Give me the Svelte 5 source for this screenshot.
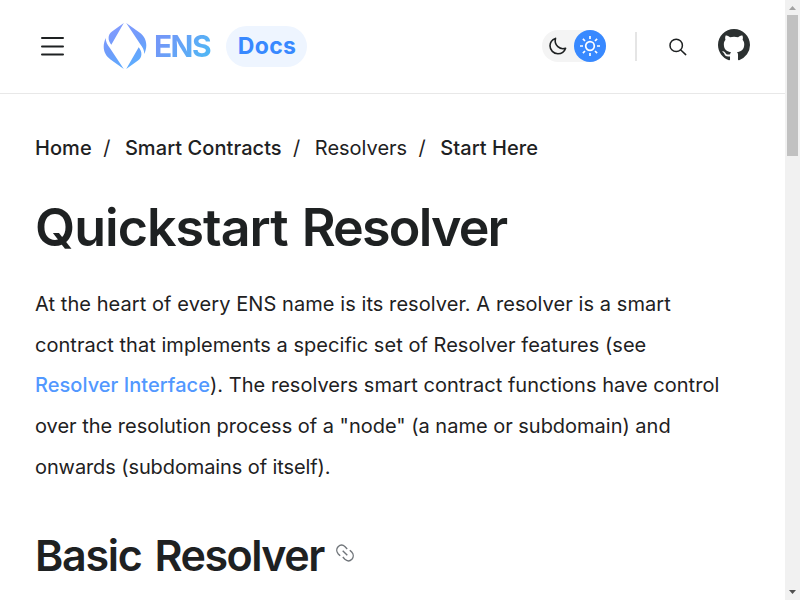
<script>
  const crumbs = [
    { label: 'Home', link: true },
    { label: 'Smart Contracts', link: true },
    { label: 'Resolvers', link: false },
    { label: 'Start Here', link: true }
  ];
</script>

<div class="window">
  <div class="page">
    <header>
      <button class="menu" aria-label="Menu">
        <svg width="24" height="20" viewBox="0 0 24 20"><path d="M2 2H23M2 10.5H23M2 18.5H23" stroke="#1e2122" stroke-width="2" stroke-linecap="round" /></svg>
      </button>
      <div class="brand">
        <svg width="44" height="48" viewBox="103 22 44 48">
          <defs>
            <linearGradient id="ens" x1="115" y1="25" x2="135" y2="69" gradientUnits="userSpaceOnUse">
              <stop offset="0" stop-color="#849cff" /><stop offset="0.45" stop-color="#6f9bfa" /><stop offset="1" stop-color="#5ab0ff" />
            </linearGradient>
          </defs>
          <g fill="url(#ens)">
            <path d="M123.8 22.9L111.3 44.7C109.5 42.4 108.4 40 108.6 37.8C108.6 35.2 109.8 33 112 31.4Z" />
            <path d="M105.7 38C105.7 42 107.4 44.8 109.7 47.8L123.8 69L110.5 59.4C103 54 102.2 46 105.7 38Z" />
            <path d="M126.2 69.1L138.7 47.3C140.5 49.6 141.6 52 141.4 54.2C141.4 56.8 140.2 59 138 60.6Z" />
            <path d="M144.3 54C144.3 50 142.6 47.2 140.3 44.2L126.2 23L139.5 32.6C147 38 147.8 46 144.3 54Z" />
          </g>
        </svg>
        <span class="ens">ENS</span>
      </div>
      <span class="docs">Docs</span>
      <div class="toggle">
        <span class="moon">
          <svg width="18" height="18" viewBox="0 0 18 18" fill="none" stroke="#1e2122" stroke-width="1.6" stroke-linejoin="round" stroke-linecap="round"><path d="M6.5 1.4C3.2 2.6 1 5.4 1 8.8C1 13.2 4.5 16.7 8.9 16.7C12.5 16.7 15.5 14.5 16.6 11.2C11.1 13.1 4.8 8.5 6.5 1.4Z" /></svg>
        </span>
        <span class="sun">
          <svg width="22" height="22" viewBox="0 0 22 22" fill="none" stroke="#fff" stroke-width="1.7"><circle cx="11" cy="11" r="4.3" /><path d="M11 1V4M11 18V21M1 11H4M18 11H21M3.9 3.9L6 6M16 16L18.1 18.1M18.1 3.9L16 6M6 16L3.9 18.1" /></svg>
        </span>
      </div>
      <span class="divider"></span>
      <button class="search" aria-label="Search">
        <svg width="18" height="18" viewBox="0 0 18 18" fill="none" stroke="#1e2122" stroke-width="1.5" stroke-linecap="round"><circle cx="7.2" cy="7.4" r="6.2" /><path d="M11.8 12L16.7 16.6" /></svg>
      </button>
      <svg class="github" width="32" height="32" viewBox="0 0 16 16" fill="#2c3131"><path d="M8 0C3.58 0 0 3.58 0 8c0 3.54 2.29 6.53 5.47 7.59.4.07.55-.17.55-.38 0-.19-.01-.82-.01-1.49-2.01.37-2.53-.49-2.69-.94-.09-.23-.48-.94-.82-1.13-.28-.15-.68-.52-.01-.53.63-.01 1.08.58 1.23.82.72 1.21 1.87.87 2.33.66.07-.52.28-.87.51-1.07-1.78-.2-3.64-.89-3.64-3.95 0-.87.31-1.59.82-2.15-.08-.2-.36-1.02.08-2.12 0 0 .67-.21 2.2.82.64-.18 1.32-.27 2-.27s1.36.09 2 .27c1.53-1.04 2.2-.82 2.2-.82.44 1.1.16 1.92.08 2.12.51.56.82 1.27.82 2.15 0 3.07-1.87 3.75-3.65 3.95.29.25.54.73.54 1.48 0 1.07-.01 1.93-.01 2.2 0 .21.15.46.55.38A8.01 8.01 0 0 0 16 8c0-4.42-3.58-8-8-8Z" /></svg>
    </header>
    <main>
      <nav>
        {#each crumbs as crumb, i}
          {#if i}<span class="slash">/</span>{/if}<span class:link={crumb.link}>{crumb.label}</span>
        {/each}
      </nav>
      <h1>Quickstart <span>Resolver</span></h1>
      <p>
        <span class="roomy">At the heart of every ENS name is its resolver. A resolver is a smart</span><br />
        contract that implements a specific set of Resolver features (see<br />
        <a href="#interface">Resolver Interface</a>). The resolvers smart contract functions have control<br />
        <span class="snug">over the resolution process of a "node" (a name or subdomain) and</span><br />
        <span class="tight">onwards (subdomains of itself).</span>
      </p>
      <div class="section">
        <h2>Basic <span>Resolver</span></h2>
        <svg width="18" height="18" viewBox="0 0 18 18" fill="none" stroke="#70757a" stroke-width="1.4"><path d="M4.2 11.8L2.3 9.9C.3 7.8.3 4.8 2.1 2.8C4.1.8 7 .8 9.1 2.7L11.2 4.9M13.8 6.2L15.7 8.1C17.7 10.2 17.7 13.2 15.9 15.2C13.9 17.2 11 17.2 8.9 15.3L6.8 13.1M6.7 6.7L11.3 11.3" /></svg>
      </div>
    </main>
  </div>
  <div class="scrollbar">
    <svg width="15" height="15" viewBox="0 0 15 15"><path d="M4 10H11L7.5 6Z" fill="#a3a3a3" /></svg>
    <div class="thumb"></div>
    <svg width="15" height="15" viewBox="0 0 15 15"><path d="M4 5H11L7.5 9Z" fill="#505050" /></svg>
  </div>
</div>

<style>
  :global(body) { overflow: hidden; background: #fff; }
  .window { display: flex; width: 800px; height: 600px; overflow: hidden; font-family: Inter, "Liberation Sans", sans-serif; color: #1e2122; }
  .page { width: 785px; flex: none; }
  svg { display: block; flex: none; }
  button { border: 0; padding: 0; background: none; }
  header { display: flex; align-items: center; box-sizing: border-box; height: 94px; padding: 0 35px 0 40px; border-bottom: 1px solid #e8e8e8; }
  .menu { margin: 0 39px 1px 0; }
  .brand { display: flex; align-items: center; width: 123px; padding-bottom: 1px; }
  .ens { margin-left: 7px; font-size: 30px; line-height: 36px; font-weight: 700; letter-spacing: -1.6px; padding-right: 2px; background: linear-gradient(125deg, #7298f8 20%, #52b5f5 85%); background-clip: text; color: transparent; }
  .docs { box-sizing: border-box; width: 81px; height: 41px; padding-left: 1px; line-height: 41px; border-radius: 21px; background: #eef5ff; color: #3889ff; text-align: center; font-size: 23px; font-weight: 700; letter-spacing: .35px; }
  .toggle { display: flex; justify-content: space-between; align-items: center; width: 64px; height: 32px; margin: 0 0 1px auto; border-radius: 16px; background: #f4f4f4; }
  .moon { padding-left: 7px; }
  .sun { display: grid; place-items: center; width: 32px; height: 32px; border-radius: 50%; background: #3889ff; }
  .divider { width: 2px; height: 29px; margin: 0 32px 0 29px; background: #e5e5e5; }
  .search { margin: 0 31px 0 0; }
  .github { margin-bottom: 3px; }
  main { padding: 41px 35px 0; }
  nav { display: flex; font-size: 20px; line-height: 26px; white-space: nowrap; }
  nav .link { font-weight: 500; letter-spacing: .07px; }
  .slash { margin: 0 14.5px 0 11.4px; }
  h1 { margin: 34px 0 0; font-size: 52px; line-height: 66px; font-weight: 600; letter-spacing: -1px; word-spacing: 2px; white-space: nowrap; }
  h1 span { letter-spacing: -1.8px; }
  p { margin: 23px 0 0; font-size: 20px; line-height: 40.7px; letter-spacing: .04px; white-space: nowrap; }
  .roomy { letter-spacing: .07px; }
  .snug { letter-spacing: -.01px; }
  .tight { letter-spacing: -.1px; }
  a { color: #5298ff; font-weight: 500; text-decoration: none; }
  .section { display: flex; align-items: center; margin-top: 39px; }
  h2 { margin: 0; font-size: 43px; line-height: 56px; font-weight: 600; letter-spacing: -1.3px; word-spacing: 3.5px; white-space: nowrap; }
  h2 span { letter-spacing: -1.5px; }
  .section svg { margin: 0 0 3px 12.5px; }
  .scrollbar { display: flex; flex-direction: column; width: 15px; background: #f1f1f1; }
  .thumb { width: 11px; height: 141px; margin: 0 2px auto; background: #c1c1c1; }
</style>
